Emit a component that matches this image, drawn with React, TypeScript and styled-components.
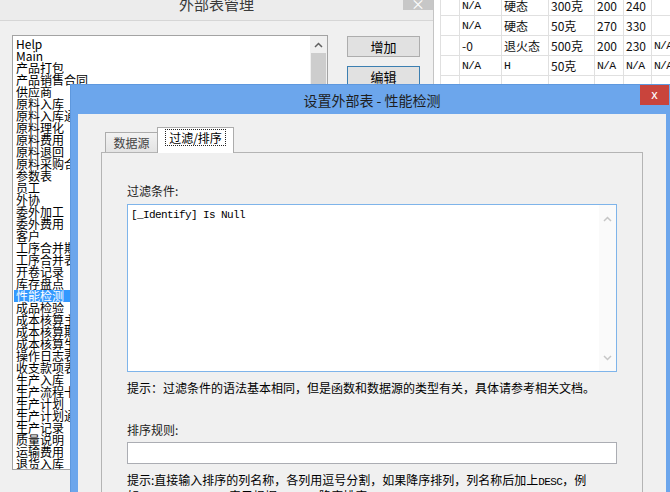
import React from 'react';
import styled, { createGlobalStyle } from 'styled-components';

const GlobalStyle = createGlobalStyle`
  html, body {
    margin: 0;
    padding: 0;
    background: #fff;
    overflow: hidden;
  }
  body {
    font-family: "Noto Sans CJK SC", "Noto Sans", sans-serif;
    font-size: 12px;
    color: #000;
  }
  * { box-sizing: border-box; }
`;

const Desktop = styled.div`
  position: relative;
  width: 670px;
  height: 492px;
  display: flex;
  overflow: hidden;
  background: #fff;
`;

/* ---------- background window: 外部表管理 ---------- */

const ParentWindow = styled.div`
  width: 434px;
  height: 492px;
  flex-shrink: 0;
  background: #f0f0f0;
  border-right: 1px solid #c4c4c4;
  display: flex;
  flex-direction: column;
`;

const ParentTitleBar = styled.div`
  position: relative;
  height: 21px;
  flex-shrink: 0;
  background: #ececec;
  border-bottom: 1px solid #d6d6d6;
  display: flex;
  justify-content: center;
  overflow: hidden;
`;

const ParentTitle = styled.div`
  margin-top: -6px;
  font-size: 15px;
  line-height: 20px;
  color: #3a3a3a;
`;

const GrayClose = styled.div`
  position: absolute;
  right: 0;
  top: 0;
  width: 30px;
  height: 10px;
  background: #c7c7c7;
  color: #fff;
  font-size: 14px;
  line-height: 6px;
  text-align: center;
  overflow: hidden;
`;

const Client = styled.div`
  display: flex;
  align-items: flex-start;
  padding: 14px 0 0 12px;
`;

const ListBox = styled.div`
  width: 316px;
  height: 435px;
  border: 1px solid #a3a3a3;
  background: #fff;
  display: flex;
  overflow: hidden;
`;

const ListItems = styled.div`
  flex: 1;
  padding: 2px 0 0 1px;
  overflow: hidden;
`;

const ListItem = styled.div<{ $selected?: boolean }>`
  height: 12px;
  line-height: 12px;
  font-size: 12px;
  padding-left: 2px;
  white-space: nowrap;
  background: ${p => (p.$selected ? '#3399ff' : 'transparent')};
  color: ${p => (p.$selected ? '#fff' : '#000')};
`;

const ListScroll = styled.div`
  width: 17px;
  background: #f0f0f0;
  display: flex;
  flex-direction: column;
  align-items: center;
`;

const ScrollArrow = styled.div`
  height: 17px;
  width: 17px;
  display: flex;
  align-items: center;
  justify-content: center;
`;

const ScrollThumb = styled.div`
  width: 15px;
  flex: 1;
  background: #cdcdcd;
`;

const ButtonColumn = styled.div`
  display: flex;
  flex-direction: column;
  gap: 9px;
  margin: 1px 0 0 19px;
`;

const WinButton = styled.div<{ $focused?: boolean }>`
  width: 73px;
  height: 21px;
  border: 1px solid ${p => (p.$focused ? '#3c7fb1' : '#adadad')};
  background: #e1e1e1;
  font-size: 13px;
  line-height: 19px;
  text-align: center;
`;

/* ---------- grid on the right ---------- */

const TableArea = styled.div`
  flex: 1;
  padding-left: 6px;
  background: #fff;
  overflow: hidden;
`;

const Grid = styled.table`
  border-collapse: collapse;
  table-layout: fixed;
  width: 252px;
  margin-top: -5px;
`;

const Col = styled.col<{ $w: number }>`
  width: ${p => p.$w}px;
`;

const Cell = styled.td<{ $mono?: boolean }>`
  height: 20px;
  border: 1px solid #e0e0e0;
  padding: 0 0 0 2px;
  white-space: nowrap;
  overflow: hidden;
  font-size: ${p => (p.$mono ? '11.5px' : '12px')};
  font-family: ${p => (p.$mono ? '"Liberation Mono", monospace' : 'inherit')};
  letter-spacing: ${p => (p.$mono ? '-0.8px' : '0')};
  line-height: 18px;
  color: #111;
`;

/* ---------- dialog: 设置外部表 ---------- */

const Dialog = styled.div`
  position: absolute;
  left: 70px;
  top: 84px;
  width: 604px;
  height: 430px;
  background: #6ca6ec;
  border: 1px solid #5e98de;
  display: flex;
  flex-direction: column;
  padding: 0 7px;
`;

const DialogTitleBar = styled.div`
  position: relative;
  height: 29px;
  margin: 0 -7px;
  display: flex;
  align-items: center;
  justify-content: center;
  font-size: 14px;
  color: #1e1e1e;
`;

const RedClose = styled.div`
  position: absolute;
  right: 4px;
  top: 0;
  width: 29px;
  height: 20px;
  background: #c9443c;
  color: #fff;
  font-size: 13px;
  line-height: 18px;
  text-align: center;
`;

const DialogBody = styled.div`
  flex: 1;
  background: #f0f0f0;
  padding: 13px 23px 0;
  display: flex;
  flex-direction: column;
`;

const TabStrip = styled.div`
  display: flex;
  align-items: flex-end;
  height: 26px;
  padding-left: 4px;
  margin-bottom: -1px;
  position: relative;
  z-index: 1;
`;

const Tab = styled.div<{ $active?: boolean }>`
  width: ${p => (p.$active ? '77px' : '53px')};
  height: ${p => (p.$active ? '26px' : '20px')};
  margin-bottom: ${p => (p.$active ? '0' : '1px')};
  margin-left: ${p => (p.$active ? '-1px' : '0')};
  border: 1px solid #acacac;
  border-bottom: none;
  background: ${p => (p.$active ? '#fff' : 'linear-gradient(#f2f2f2, #e3e3e3)')};
  color: ${p => (p.$active ? '#000' : '#444')};
  display: flex;
  justify-content: center;
  align-items: ${p => (p.$active ? 'flex-start' : 'center')};
  padding-top: ${p => (p.$active ? '1px' : '0')};
  font-size: 12px;
`;

const FocusLabel = styled.span`
  border: 1px dotted #222;
  padding: 0 3px;
  line-height: 15px;
`;

const Panel = styled.div`
  flex: 1;
  border: 1px solid #b4b4b4;
  background: #f0f0f0;
  padding: 31px 25px 0;
`;

const FieldLabel = styled.div<{ $gap?: number }>`
  margin-top: ${p => p.$gap ?? 0}px;
  line-height: 14px;
  font-size: 12px;
  color: #222;
`;

const TextBox = styled.div`
  margin-top: 6px;
  width: 490px;
  height: 168px;
  border: 1px solid #7eb4ea;
  background: #fff;
  display: flex;
`;

const TextContent = styled.div`
  flex: 1;
  padding: 3px 3px;
  font-family: "Liberation Mono", monospace;
  font-size: 11px;
  letter-spacing: -0.6px;
  line-height: 14px;
  color: #000;
`;

const TextScroll = styled.div`
  width: 17px;
  background: #fafafa;
  display: flex;
  flex-direction: column;
  justify-content: space-between;
  padding: 5px 0;
`;

const Hint = styled.div<{ $gap: number }>`
  margin-top: ${p => p.$gap}px;
  font-size: 12px;
  line-height: 14px;
  color: #000;
  white-space: nowrap;
`;

const Mono = styled.span`
  font-family: "Liberation Mono", monospace;
  font-size: 11px;
  letter-spacing: -0.6px;
`;

const LineInput = styled.div`
  margin-top: 5px;
  width: 490px;
  height: 22px;
  border: 1px solid #abadb3;
  background: #fff;
`;

const Chevron: React.FC<{ up?: boolean; color: string }> = ({ up, color }) => (
  <ScrollArrow>
    <svg width="9" height="6" viewBox="0 0 9 6">
      <path
        d={up ? 'M1 5 L4.5 1.5 L8 5' : 'M1 1 L4.5 4.5 L8 1'}
        fill="none"
        stroke={color}
        strokeWidth="1.5"
      />
    </svg>
  </ScrollArrow>
);

const tables = [
  'Help', 'Main', '产品打包', '产品销售合同', '供应商', '原料入库', '原料入库通知单',
  '原料理化', '原料费用', '原料退回', '原料采购合同', '参数表', '员工', '外协',
  '委外加工', '委外费用', '客户', '工序合并期初', '工序合并表', '开卷记录', '库存盘点',
  '性能检测', '成品检验', '成本核算主表', '成本核算期初', '成本核算生产', '操作日志表',
  '收支款项表', '生产入库', '生产流程卡', '生产计划', '生产计划通知', '生产记录',
  '质量说明', '运输费用', '退货入库',
];

const colWidths = [19, 42, 47, 46, 29, 28, 41];

const rows: string[][] = [
  ['', 'N/A', '硬态', '300克', '200', '240', ''],
  ['', 'N/A', '硬态', '50克', '270', '330', ''],
  ['', '-0', '退火态', '500克', '200', '230', 'N/A'],
  ['', 'N/A', 'H', '50克', 'N/A', 'N/A', 'N/A'],
  ['', '', '', '', '', '', ''],
  ['', '', '', '', '', '', ''],
];

const isMono = (v: string) => v === 'N/A' || v === 'H';

const App: React.FC = () => {
  return (
    <>
      <GlobalStyle />
      <Desktop>
        <ParentWindow>
          <ParentTitleBar>
            <ParentTitle>外部表管理</ParentTitle>
            <GrayClose>×</GrayClose>
          </ParentTitleBar>
          <Client>
            <ListBox>
              <ListItems>
                {tables.map(t => (
                  <ListItem key={t} $selected={t === '性能检测'}>
                    {t}
                  </ListItem>
                ))}
              </ListItems>
              <ListScroll>
                <Chevron up color="#606060" />
                <ScrollThumb />
              </ListScroll>
            </ListBox>
            <ButtonColumn>
              <WinButton>增加</WinButton>
              <WinButton $focused>编辑</WinButton>
            </ButtonColumn>
          </Client>
        </ParentWindow>

        <TableArea>
          <Grid>
            <colgroup>
              {colWidths.map((w, i) => (
                <Col key={i} $w={w} />
              ))}
            </colgroup>
            <tbody>
              {rows.map((r, i) => (
                <tr key={i}>
                  {r.map((v, j) => (
                    <Cell key={j} $mono={isMono(v)}>
                      {v}
                    </Cell>
                  ))}
                </tr>
              ))}
            </tbody>
          </Grid>
        </TableArea>

        <Dialog>
          <DialogTitleBar>
            设置外部表 - 性能检测
            <RedClose>x</RedClose>
          </DialogTitleBar>
          <DialogBody>
            <TabStrip>
              <Tab>数据源</Tab>
              <Tab $active>
                <FocusLabel>过滤/排序</FocusLabel>
              </Tab>
            </TabStrip>
            <Panel>
              <FieldLabel>过滤条件:</FieldLabel>
              <TextBox>
                <TextContent>[_Identify] Is Null</TextContent>
                <TextScroll>
                  <Chevron up color="#c6c6c6" />
                  <Chevron color="#c6c6c6" />
                </TextScroll>
              </TextBox>
              <Hint $gap={9}>
                提示：过滤条件的语法基本相同，但是函数和数据源的类型有关，具体请参考相关文档。
              </Hint>
              <FieldLabel $gap={28}>排序规则:</FieldLabel>
              <LineInput />
              <Hint $gap={9}>
                提示:直接输入排序的列名称，各列用逗号分割，如果降序排列，列名称后加上<Mono>DESC</Mono>，例
                <br />
                如: <Mono> OrderId DESC</Mono>，表示根据<Mono>OrderID</Mono>降序排序
              </Hint>
            </Panel>
          </DialogBody>
        </Dialog>
      </Desktop>
    </>
  );
};

export default App;
